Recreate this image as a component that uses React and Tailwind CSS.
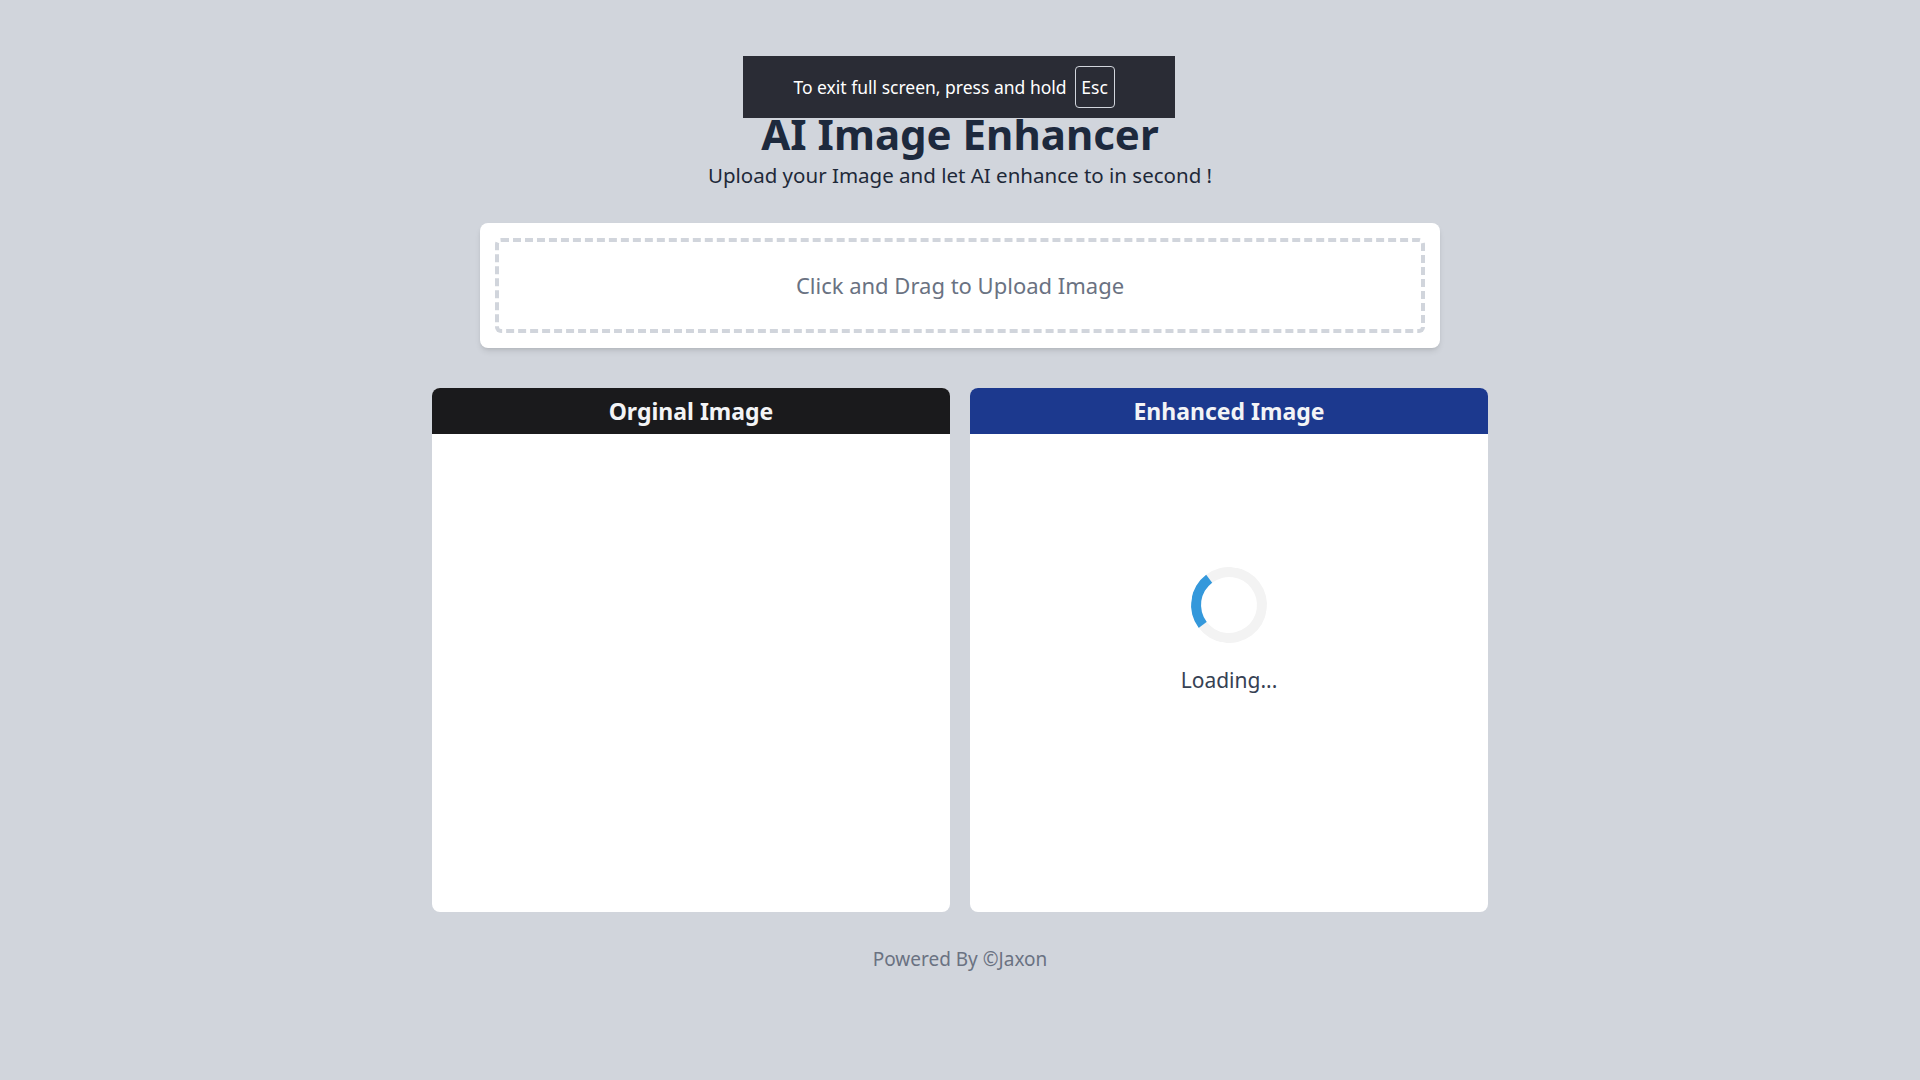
const Panel = ({ title, headerClass, children }) => {
  return (
    <div className="w-[518px] h-[524px] bg-white rounded-lg overflow-hidden flex flex-col">
      <div className={`h-[46px] flex items-center justify-center ${headerClass}`}>
        <h2 className="text-[23px] font-bold text-gray-100">{title}</h2>
      </div>
      <div className="flex-1">{children}</div>
    </div>
  );
};

const App = () => {
  return (
    <div className="relative min-h-screen bg-gray-300 font-['Noto_Sans',sans-serif]">
      {/* fullscreen notice */}
      <div className="absolute left-[743px] top-[56px] w-[432px] h-[62px] bg-[#2a2c35] flex items-center justify-center gap-[8px] pr-[10px] text-white text-[17.5px] z-10">
        <span>To exit full screen, press and hold</span>
        <span className="h-[42px] w-[40px] flex items-center justify-center border border-gray-300 rounded-sm">Esc</span>
      </div>

      <div className="flex flex-col items-center pt-[107px]">
        <h1 className="text-[42px] leading-[54px] font-bold text-slate-800">AI Image Enhancer</h1>
        <p className="text-[20.5px] leading-[28px] text-gray-800">Upload your Image and let AI enhance to in second !</p>

        <div className="mt-[34px] w-[960px] bg-white rounded-lg shadow-md p-[15px]">
          <div className="h-[95px] border-4 border-dashed border-gray-300 rounded-md flex items-center justify-center cursor-pointer">
            <span className="text-[22px] text-gray-500">Click and Drag to Upload Image</span>
          </div>
        </div>

        <div className="mt-[40px] flex gap-[20px]">
          <Panel title="Orginal Image" headerClass="bg-[#1a1a1c]" />
          <Panel title="Enhanced Image" headerClass="bg-blue-900">
            <div className="flex flex-col items-center pt-[133px]">
              <div className="w-[76px] h-[76px] rounded-full border-[10px] border-[#f3f3f3] border-l-[#3498db] rotate-[8deg]"></div>
              <p className="mt-[22px] text-[21px] text-gray-700">Loading...</p>
            </div>
          </Panel>
        </div>

        <footer className="mt-[33px] text-[19px] text-gray-500">Powered By ©Jaxon</footer>
      </div>
    </div>
  );
};

export default App;
